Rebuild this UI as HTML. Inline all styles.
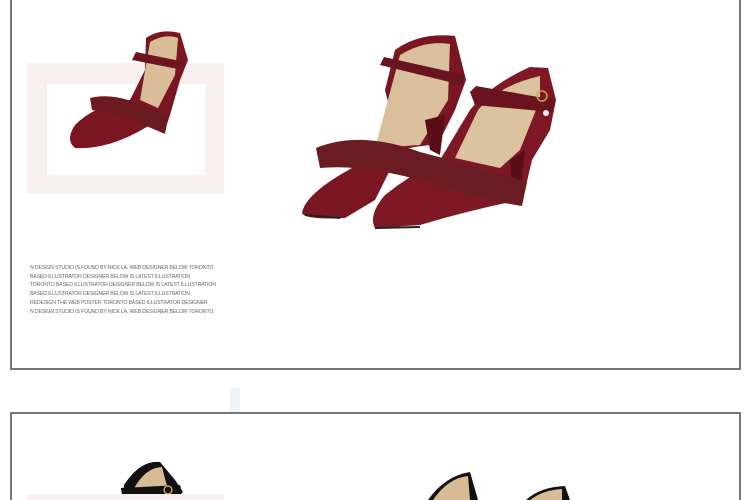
<!DOCTYPE html>
<html><head><meta charset="utf-8"><style>
html,body{margin:0;padding:0;background:#fff;width:750px;height:500px;overflow:hidden;position:relative;font-family:"Liberation Sans",sans-serif}
.box{position:absolute;border:2px solid #777;box-sizing:border-box}
.txt{position:absolute;left:30px;top:264px;font-size:5.2px;line-height:8.7px;color:#666;letter-spacing:-0.15px;white-space:nowrap}
</style></head><body>
<div class="box" style="left:10px;top:-4px;width:731px;height:374px"></div>
<div class="box" style="left:10px;top:412px;width:731px;height:100px"></div>
<div style="position:absolute;left:230px;top:388px;width:10px;height:24px;background:#eef3f8"></div>
<svg width="750" height="500" style="position:absolute;left:0;top:0">
<rect x="27" y="63" width="197" height="131" fill="#f8efef"/>
<rect x="47" y="84" width="158" height="91" fill="#fff"/>
<!-- small shoe -->
<path d="M146 38 Q160 28 180 33 L188 60 L180 80 L170 115 L165 130 L160 118 L150 125 Q110 150 75 148 Q65 140 75 125 Q95 105 130 100 L145 70 Z" fill="#7a1622"/>
<path d="M150 42 Q165 33 178 38 L175 75 L158 108 L140 100 Z" fill="#d8bd98"/>
<path d="M132 60 L136 52 L185 62 L183 70 Z" fill="#6e1420"/>
<path d="M90 98 Q120 90 168 118 L165 134 Q120 114 92 110 Z" fill="#6a1a20"/>
<!-- main left shoe -->
<path d="M395 50 Q420 32 455 36 L466 80 L455 110 L440 140 L430 145 Q380 150 345 172 Q305 195 302 213 Q305 220 345 218 L375 200 L400 150 L385 90 Z" fill="#7a1622"/>
<path d="M400 55 Q425 40 450 44 L448 100 L420 145 L375 148 Z" fill="#d9bf9b"/>
<path d="M380 65 L384 57 L465 75 L462 85 Z" fill="#6a1420"/>
<path d="M425 120 L445 115 L440 155 L430 150 Z" fill="#5a0f18"/>
<!-- main right shoe -->
<path d="M470 110 Q490 85 530 67 L548 68 L556 100 L550 130 L532 160 L525 190 L520 200 Q470 210 420 225 L375 228 Q368 215 385 195 Q410 175 440 160 Z" fill="#7e1824"/>
<path d="M478 110 Q500 85 540 76 L540 100 L520 150 L500 168 L455 158 Z" fill="#dcc3a0"/>
<path d="M470 92 L476 86 L555 100 L552 112 L475 105 Z" fill="#6a1420"/>
<circle cx="542" cy="96" r="5" fill="none" stroke="#c9a050" stroke-width="1.5"/>
<circle cx="546" cy="113" r="3" fill="#eee"/>
<path d="M510 160 L525 150 L520 195 L512 192 Z" fill="#5a0f18"/>
<!-- fur -->
<path d="M316 148 Q360 130 420 152 Q470 165 527 182 L522 206 Q470 198 420 180 Q360 164 320 168 Z" fill="#6a1c22"/>
<path d="M305 215 L340 218 M375 228 L420 227" stroke="#222" stroke-width="2"/>
<!-- bottom shoes -->
<path d="M122 500 L124 485 Q140 460 160 462 L175 480 L183 492 L175 500 Z" fill="#111"/>
<path d="M130 497 Q142 468 162 467 L168 490 Z" fill="#d6bb95"/>
<path d="M121 488 L180 485 L182 493 L122 495 Z" fill="#111"/>
<circle cx="168" cy="490" r="4" fill="none" stroke="#c9a050" stroke-width="1.5"/>
<rect x="27" y="494" width="197" height="6" fill="#f8efef"/>
<path d="M428 500 Q445 476 470 472 L478 500 Z" fill="#111"/>
<path d="M433 500 Q448 478 468 476 L470 500 Z" fill="#d6bb95"/>
<path d="M526 500 Q540 487 565 486 L570 500 Z" fill="#111"/>
<path d="M530 500 Q543 490 562 489 L562 500 Z" fill="#d6bb95"/>
</svg>
<div class="txt">N DESIGN STUDIO IS FOUND BY NICK LA. WEB DESIGNER BELOW TORONTO<br>BASED ILLUSTRATOR DESIGNER BELOW IS LATEST ILLUSTRATION<br>TORONTO BASED ILLUSTRATOR DESIGNER BELOW IS LATEST ILLUSTRATION<br>BASED ILLUSTRATOR DESIGNER BELOW IS LATEST ILLUSTRATION<br>REDESIGN THE WEB POSTER TORONTO BASED ILLUSTRATOR DESIGNER<br>N DESIGN STUDIO IS FOUND BY NICK LA. WEB DESIGNER BELOW TORONTO</div>
</body></html>
